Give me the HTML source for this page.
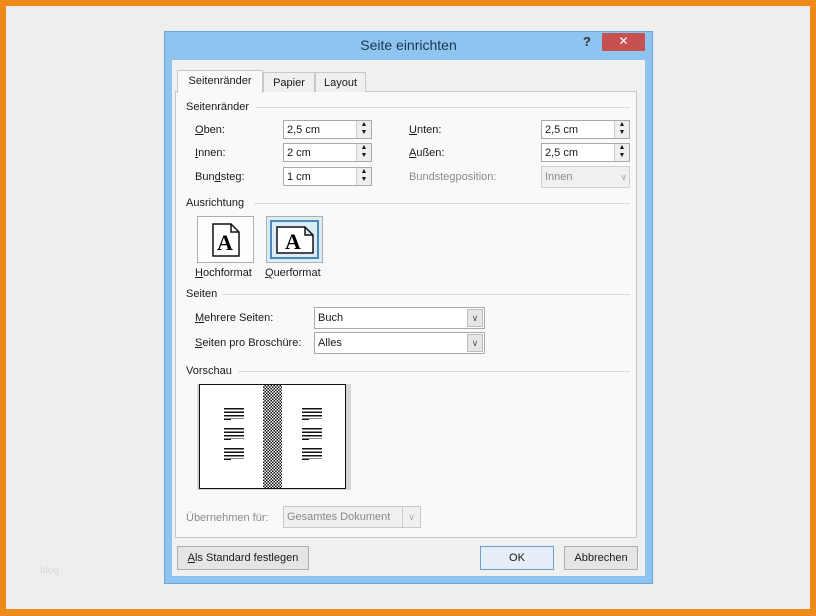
<!DOCTYPE html>
<html><head><meta charset="utf-8"><style>
*{box-sizing:border-box;margin:0;padding:0}
body{width:816px;height:616px;background:#eeeeee;position:relative;overflow:hidden;font-family:"Liberation Sans",sans-serif;font-size:11px;color:#1a1a1a}
.a{position:absolute}
.frame{left:0;top:0;width:816px;height:616px;border:6px solid #ee8a1c;border-bottom-width:7px}
.dlg{left:164px;top:31px;width:489px;height:553px;background:#8ec5f0;border:1px solid #6aa6d8}
.body{left:172px;top:60px;width:473px;height:516px;background:#f0f0f0}
.panel{left:175px;top:91px;width:462px;height:447px;border:1px solid #c8c8c8;background:#f9f9f9}
.tab{height:22px;border:1px solid #c8c8c8;border-bottom:none;background:#f0f0f0;text-align:center;line-height:20px}
.sec{height:1px;background:#dcdcdc}
.inp{height:19px;border:1px solid #a9a9a9;background:#fff;padding-left:3px;line-height:18px}
.spin{width:15px;height:17px;border-left:1px solid #ccc;background:#eee;right:0;top:0;font-size:7px;line-height:8px;text-align:center}
.dd{height:22px;border:1px solid #a9a9a9;background:#fff;padding-left:3px;line-height:20px}
.ddb{width:16px;height:18px;right:1px;top:1px;background:#e6e6e6;border:1px solid #bbb;font-size:9px;text-align:center;line-height:16px;color:#555}
.btn{height:24px;border:1px solid #adadad;background:#e5e5e5;text-align:center;line-height:22px}
u{text-decoration:underline}
.g{color:#8a8a8a}
.lg{position:absolute;width:20px;height:14px;background:repeating-linear-gradient(#111 0 1.5px,transparent 1.5px 3.5px)}
.lg::after{content:"";position:absolute;left:7px;right:0;bottom:0;height:3px;background:#fff}
</style></head><body>
<div class="a frame"></div>
<div class="a" style="left:40px;top:565px;color:#d8d8d8;font-size:10px">blog</div>
<div class="a dlg"></div>
<div class="a" style="left:164px;top:37px;width:489px;text-align:center;font-size:14px;color:#1e3350">Seite einrichten</div>
<div class="a" style="left:583px;top:34px;font-size:13px;font-weight:bold;color:#333">?</div>
<div class="a" style="left:602px;top:33px;width:43px;height:18px;background:#c75050;color:#fff;text-align:center;line-height:17px;font-size:12px">✕</div>
<div class="a body"></div>
<div class="a panel"></div>
<div class="a tab" style="left:177px;top:70px;width:86px;height:23px;background:#f9f9f9">Seitenränder</div>
<div class="a tab" style="left:263px;top:72px;width:52px;height:20px">Papier</div>
<div class="a tab" style="left:315px;top:72px;width:51px;height:20px">Layout</div>

<div class="a" style="left:186px;top:101px">Seitenränder</div><div class="a sec" style="left:256px;top:107px;width:374px"></div>
<div class="a" style="left:195px;top:124px"><u>O</u>ben:</div>
<div class="a" style="left:195px;top:147px"><u>I</u>nnen:</div>
<div class="a" style="left:195px;top:171px">Bun<u>d</u>steg:</div>
<div class="a inp" style="left:283px;top:120px;width:89px">2,5 cm<div class="a spin">▲<br>▼</div></div>
<div class="a inp" style="left:283px;top:143px;width:89px">2 cm<div class="a spin">▲<br>▼</div></div>
<div class="a inp" style="left:283px;top:167px;width:89px">1 cm<div class="a spin">▲<br>▼</div></div>
<div class="a" style="left:409px;top:124px"><u>U</u>nten:</div>
<div class="a" style="left:409px;top:147px"><u>A</u>ußen:</div>
<div class="a g" style="left:409px;top:171px">Bundstegposition:</div>
<div class="a inp" style="left:541px;top:120px;width:89px">2,5 cm<div class="a spin">▲<br>▼</div></div>
<div class="a inp" style="left:541px;top:143px;width:89px">2,5 cm<div class="a spin">▲<br>▼</div></div>
<div class="a inp g" style="left:541px;top:166px;width:89px;height:22px;background:#f0f0f0;border-color:#d0d0d0;line-height:20px">Innen<div class="a" style="right:2px;top:0;color:#aaa;font-size:9px">∨</div></div>

<div class="a" style="left:186px;top:197px">Ausrichtung</div><div class="a sec" style="left:254px;top:203px;width:376px"></div>
<div class="a" style="left:197px;top:216px;width:57px;height:47px;border:1px solid #adadad;background:#fdfdfd"><svg class="a" style="left:14px;top:6px" width="28" height="34"><path d="M1 1H19L27 9V33H1Z M19 1V9H27" fill="#fff" stroke="#111" stroke-width="1.5"/><text x="13" y="27" font-family="Liberation Serif" font-weight="bold" font-size="22" text-anchor="middle">A</text></svg></div>
<div class="a" style="left:266px;top:216px;width:57px;height:47px;border:1px solid #adadad;background:#dcecf6"><div class="a" style="left:3px;top:3px;width:49px;height:39px;border:2px solid #4a8ab8"></div><svg class="a" style="left:9px;top:9px" width="38" height="28"><path d="M1 1H29L37 9V27H1Z M29 1V9H37" fill="#fff" stroke="#111" stroke-width="1.5"/><text x="17" y="23" font-family="Liberation Serif" font-weight="bold" font-size="22" text-anchor="middle">A</text></svg></div>
<div class="a" style="left:195px;top:267px"><u>H</u>ochformat</div>
<div class="a" style="left:265px;top:267px"><u>Q</u>uerformat</div>

<div class="a" style="left:186px;top:288px">Seiten</div><div class="a sec" style="left:222px;top:294px;width:408px"></div>
<div class="a" style="left:195px;top:312px"><u>M</u>ehrere Seiten:</div>
<div class="a" style="left:195px;top:337px"><u>S</u>eiten pro Broschüre:</div>
<div class="a dd" style="left:314px;top:307px;width:171px">Buch<div class="a ddb">∨</div></div>
<div class="a dd" style="left:314px;top:332px;width:171px">Alles<div class="a ddb">∨</div></div>

<div class="a" style="left:186px;top:365px">Vorschau</div><div class="a sec" style="left:238px;top:371px;width:392px"></div>
<div class="a" style="left:197px;top:384px;width:154px;height:106px;background:#d6d6d6"></div>
<div class="a" style="left:199px;top:384px;width:147px;height:105px;border:1.5px solid #111;background:#fff"></div>
<div class="a" style="left:263px;top:385px;width:19px;height:103px;background:repeating-conic-gradient(#111 0 25%,#fff 0 50%) 0 0/3px 3px"></div>
<div class="lg" style="left:224px;top:408px"></div>
<div class="lg" style="left:224px;top:428px"></div>
<div class="lg" style="left:224px;top:448px"></div>
<div class="lg" style="left:302px;top:408px"></div>
<div class="lg" style="left:302px;top:428px"></div>
<div class="lg" style="left:302px;top:448px"></div>

<div class="a g" style="left:186px;top:512px">Übernehmen für:</div>
<div class="a inp g" style="left:283px;top:506px;width:138px;height:22px;background:#f0f0f0;border-color:#c8c8c8;line-height:20px">Gesamtes Dokument<div class="a" style="right:0;top:0;width:18px;height:20px;border-left:1px solid #ccc;text-align:center;color:#aaa;font-size:9px">∨</div></div>

<div class="a btn" style="left:177px;top:546px;width:132px"><u>A</u>ls Standard festlegen</div>
<div class="a btn" style="left:480px;top:546px;width:74px;border-color:#6a9ed0;background:#e5eef7">OK</div>
<div class="a btn" style="left:564px;top:546px;width:74px">Abbrechen</div>
</body></html>
